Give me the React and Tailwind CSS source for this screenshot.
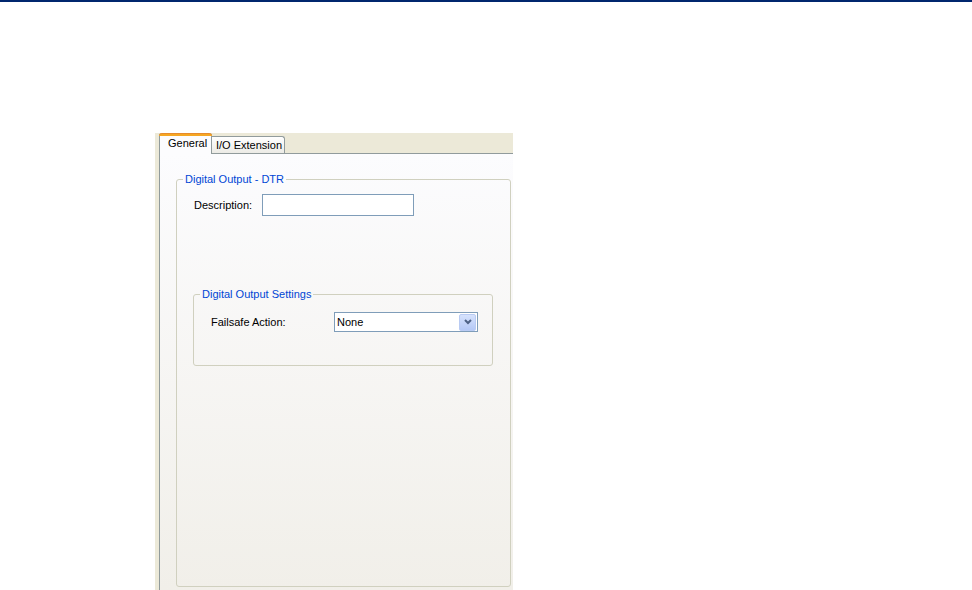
export default function App() {
  return (
    <div className="w-[972px] h-[590px] bg-white overflow-hidden" style={{ fontFamily: '"Liberation Sans", Arial, sans-serif' }}>
      <div className="h-[2px] bg-[#00266E]" />
      <div className="ml-[155px] mt-[131px] w-[358px] h-[457px] flex flex-col bg-[#ECE9D8]">
        {/* tab strip */}
        <div className="h-[20px] flex items-end pl-[4px] relative z-10">
          <div className="h-[21px] w-[53px] -mb-px bg-[#FCFCFE] border-x border-[#919B9C] rounded-t-[3px] relative">
            <div className="absolute -left-px -right-px top-0 h-[3px] bg-[#F5A623] rounded-t-[3px] border-t border-[#E68B2C]" />
            <div className="pt-[4px] pl-[8px] text-[11px] leading-[13px] text-black">General</div>
          </div>
          <div className="h-[17px] w-[73px] bg-gradient-to-b from-white to-[#ECEBE6] border-t border-r border-[#919B9C] rounded-tr-[3px]">
            <div className="pt-[2px] pl-[4px] text-[11px] leading-[13px] text-black">I/O Extension</div>
          </div>
        </div>
        {/* content */}
        <div className="flex-1 ml-[4px] border-t border-l border-[#919B9C] bg-gradient-to-b from-[#FCFCFE] to-[#F1EFE9] pl-[16px] pt-[19px]">
          <fieldset className="w-[335px] h-[414px] border border-[#D0D0BF] rounded-[3px]">
            <legend className="ml-[6px] px-[2px] text-[11px] leading-[13px] text-[#0046D5]">Digital Output - DTR</legend>
            <div className="flex items-center mt-[8px] pl-[17px]">
              <div className="w-[68px] text-[11px] leading-[13px] text-black">Description:</div>
              <div className="w-[152px] h-[22px] bg-white border border-[#7F9DB9]" />
            </div>
            <fieldset className="ml-[16px] mt-[72px] w-[300px] border border-[#D0D0BF] rounded-[3px] pb-[33px]">
              <legend className="ml-[6px] px-[2px] text-[11px] leading-[13px] text-[#0046D5]">Digital Output Settings</legend>
              <div className="flex items-center mt-[11px] pl-[17px]">
                <div className="w-[123px] text-[11px] leading-[13px] text-black">Failsafe Action:</div>
                <div className="w-[144px] h-[20px] bg-white border border-[#7F9DB9] flex items-center justify-between">
                  <span className="pl-[2px] text-[11px] leading-[13px] text-black">None</span>
                  <div className="w-[17px] h-[17px] mr-px rounded-[2px] bg-gradient-to-b from-[#D6E2FC] to-[#B4C8F6] border border-[#B9CBF3] flex items-center justify-center">
                    <svg width="8" height="6" viewBox="0 0 8 6">
                      <path d="M1 1 L4 4 L7 1" fill="none" stroke="#4D6185" strokeWidth="2" />
                    </svg>
                  </div>
                </div>
              </div>
            </fieldset>
          </fieldset>
        </div>
      </div>
    </div>
  );
}
